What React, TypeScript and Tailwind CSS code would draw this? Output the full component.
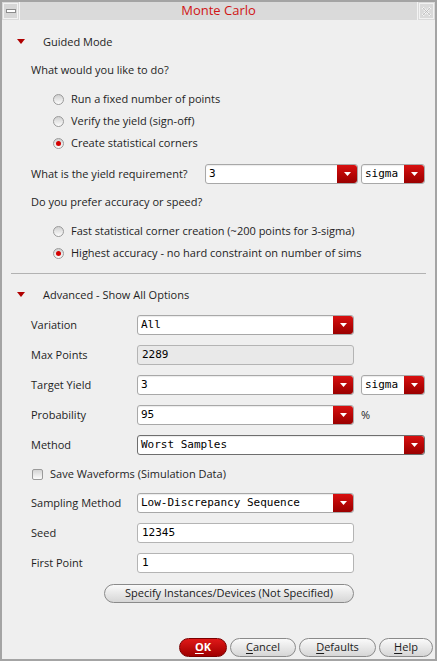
import type { ReactNode } from "react";

const sans = "font-['Open_Sans','Noto_Sans',sans-serif]";
const mono = "font-['DejaVu_Sans_Mono','Liberation_Mono',monospace]";

function Triangle() {
  return (
    <svg width="8" height="6" viewBox="0 0 8 6" className="ml-[15px] mr-[18px]">
      <path d="M0 0 H8 L4 5 Z" fill="#b00000" />
    </svg>
  );
}

function Radio({ checked, label }: { checked?: boolean; label: string }) {
  return (
    <div className="flex h-[22px] items-center pl-[51px]">
      <span className="flex h-[11px] w-[11px] items-center justify-center rounded-full border border-[#9a9a9a] bg-gradient-to-b from-[#d0d0d0] to-[#fdfdfd]">
        {checked && <span className="h-[5px] w-[5px] rounded-full bg-[#d40000]" />}
      </span>
      <span className="ml-[7px]">{label}</span>
    </div>
  );
}

function Arrow() {
  return (
    <span className="flex h-full w-[20px] items-center justify-center rounded-r-[3px] bg-gradient-to-b from-[#d81010] to-[#9a0000]">
      <svg width="7" height="4" viewBox="0 0 7 4">
        <path d="M0 0 H7 L3.5 4 Z" fill="#ffffff" />
      </svg>
    </span>
  );
}

function Combo({ value, width, heavy }: { value: string; width: string; heavy?: boolean }) {
  return (
    <div
      className={`flex h-[20px] items-center rounded-[3px] border bg-white shadow-[inset_0_1px_1px_rgba(0,0,0,0.08)] ${
        heavy ? "border-[#6e6e6e]" : "border-[#a8a8a8]"
      } ${width}`}
    >
      <span className={`flex-1 pl-[3px] text-[11px] text-black ${mono}`}>{value}</span>
      <Arrow />
    </div>
  );
}

function Field({ value, disabled }: { value: string; disabled?: boolean }) {
  return (
    <div
      className={`flex h-[20px] w-[217px] items-center rounded-[3px] border border-[#b4b4b4] pl-[4px] text-[11px] text-black ${mono} ${
        disabled ? "bg-[#e9e9e9]" : "bg-white"
      }`}
    >
      {value}
    </div>
  );
}

function Row({ label, children, h = "h-[30px]" }: { label: string; children: ReactNode; h?: string }) {
  return (
    <div className={`flex items-center pl-[29px] ${h}`}>
      <span className="w-[106px]">{label}</span>
      {children}
    </div>
  );
}

function PillButton({ children, className }: { children: ReactNode; className: string }) {
  return (
    <div
      className={`flex h-[19px] items-center justify-center rounded-full border border-[#8a8a8a] bg-gradient-to-b from-[#fafafa] to-[#d6d6d6] text-[11px] text-[#1a1a1a] ${className}`}
    >
      {children}
    </div>
  );
}

export default function App() {
  return (
    <div
      className={`flex h-[661px] w-[437px] flex-col overflow-hidden border-2 border-[#a4a4a4] bg-[#efefef] text-[11px] text-[#1e1e1e] ${sans}`}
    >
      {/* title bar */}
      <div className="flex h-[18px] shrink-0 items-stretch bg-[#dadada]">
        <div className="m-[1px] flex w-[15px] items-center justify-center border border-[#f2f2f2] bg-[#d6d6d6]">
          <span className="h-[4px] w-[10px] border border-[#8c8c8c] bg-white" />
        </div>
        <div className="w-px bg-[#f4f4f4]" />
        <div className="flex flex-1 items-center justify-center text-[13px] text-[#d01414]">Monte Carlo</div>
        <div className="w-px bg-[#f4f4f4]" />
        <div className="m-[1px] flex w-[15px] items-center justify-center border border-[#f2f2f2]">
          <svg width="11" height="11" viewBox="0 0 11 11">
            <path
              d="M1.5 1.5 L9.5 9.5 M9.5 1.5 L1.5 9.5"
              stroke="#f8f8f8"
              strokeWidth="2.4"
              strokeDasharray="1.4 1"
            />
            <path d="M1.5 1.5 L9.5 9.5 M9.5 1.5 L1.5 9.5" stroke="#b8b8b8" strokeWidth="0.8" />
          </svg>
        </div>
      </div>

      {/* guided mode */}
      <div className="mt-[12px] flex h-[20px] items-center">
        <Triangle />
        <span>Guided Mode</span>
      </div>
      <div className="mt-[8px] flex h-[20px] items-center pl-[29px]">What would you like to do?</div>
      <div className="mt-[8px]">
        <Radio label="Run a fixed number of points" />
        <Radio label="Verify the yield (sign-off)" />
        <Radio label="Create statistical corners" checked />
      </div>
      <div className="mt-[9px] flex h-[22px] items-center pl-[29px]">
        <span className="w-[174px]">What is the yield requirement?</span>
        <Combo value="3" width="w-[153px]" />
        <Combo value="sigma" width="ml-[3px] w-[64px]" />
      </div>
      <div className="mt-[7px] flex h-[20px] items-center pl-[29px]">Do you prefer accuracy or speed?</div>
      <div className="mt-[8px]">
        <Radio label="Fast statistical corner creation (~200 points for 3-sigma)" />
        <Radio label="Highest accuracy - no hard constraint on number of sims" checked />
      </div>
      <div className="mx-[9px] mt-[9px] h-px bg-[#b2b2b2]" />

      {/* advanced */}
      <div className="mt-[11px] flex h-[20px] items-center">
        <Triangle />
        <span>Advanced - Show All Options</span>
      </div>
      <div className="mt-[5px]">
        <Row label="Variation">
          <Combo value="All" width="w-[217px]" />
        </Row>
        <Row label="Max Points">
          <Field value="2289" disabled />
        </Row>
        <Row label="Target Yield">
          <Combo value="3" width="w-[217px]" />
          <Combo value="sigma" width="ml-[7px] w-[64px]" />
        </Row>
        <Row label="Probability">
          <Combo value="95" width="w-[217px]" />
          <span className="ml-[7px]">%</span>
        </Row>
        <Row label="Method">
          <Combo value="Worst Samples" width="w-[288px]" heavy />
        </Row>
        <div className="flex h-[28px] items-center pl-[30px]">
          <span className="h-[11px] w-[11px] rounded-[2px] border border-[#9a9a9a] bg-gradient-to-b from-[#d4d4d4] to-[#fbfbfb]" />
          <span className="ml-[7px]">Save Waveforms (Simulation Data)</span>
        </div>
        <Row label="Sampling Method">
          <Combo value="Low-Discrepancy Sequence" width="w-[217px]" />
        </Row>
        <Row label="Seed">
          <Field value="12345" />
        </Row>
        <Row label="First Point">
          <Field value="1" />
        </Row>
      </div>
      <div className="mt-[6px] flex pl-[102px]">
        <PillButton className="w-[250px]">Specify Instances/Devices (Not Specified)</PillButton>
      </div>

      <div className="flex-1" />

      {/* bottom buttons */}
      <div className="mb-[2px] flex justify-end gap-[3px] pr-[2px]">
        <div className="flex h-[19px] w-[48px] items-center justify-center rounded-full border border-[#7a0000] bg-gradient-to-b from-[#e01818] to-[#a00000] text-[11px] font-bold text-white">
          <span className="underline decoration-1 underline-offset-2">O</span>K
        </div>
        <PillButton className="w-[66px]">
          <span className="underline decoration-1 underline-offset-2">C</span>ancel
        </PillButton>
        <PillButton className="w-[77px]">
          <span className="underline decoration-1 underline-offset-2">D</span>efaults
        </PillButton>
        <PillButton className="w-[54px]">
          <span className="underline decoration-1 underline-offset-2">H</span>elp
        </PillButton>
      </div>
    </div>
  );
}
